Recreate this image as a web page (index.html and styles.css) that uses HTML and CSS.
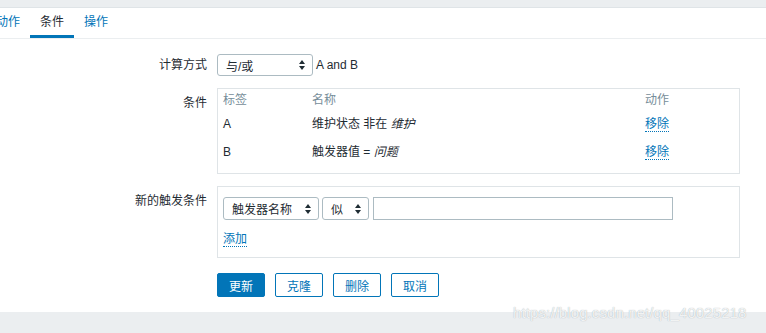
FILE: index.html
```html
<!DOCTYPE html>
<html lang="zh-CN">
<head>
    <meta charset="UTF-8">
    <title>条件</title>
    <link rel="stylesheet" href="styles.css">
</head>
<body>
    <div class="page">
        <div class="panel">
            <ul class="tabs">
                <li class="tab">动作</li>
                <li class="tab active">条件</li>
                <li class="tab">操作</li>
            </ul>

            <div class="form">
                <div class="row">
                    <div class="label">计算方式</div>
                    <div class="field inline">
                        <div class="sel sel-calc">
                            <span>与/或</span>
                            <svg class="arrows" width="6" height="10" viewBox="0 0 6 10"><path d="M3 0 L6 4 L0 4 Z M0 6 L6 6 L3 10 Z" fill="#1f2c33"/></svg>
                        </div>
                        <span class="expr">A and B</span>
                    </div>
                </div>

                <div class="row">
                    <div class="label">条件</div>
                    <div class="field box cond">
                        <div class="trow head">
                            <div class="c1">标签</div>
                            <div class="c2">名称</div>
                            <div class="c3">动作</div>
                        </div>
                        <div class="trow">
                            <div class="c1">A</div>
                            <div class="c2">维护状态 非在 <i>维护</i></div>
                            <div class="c3"><a class="link">移除</a></div>
                        </div>
                        <div class="trow">
                            <div class="c1">B</div>
                            <div class="c2">触发器值 = <i>问题</i></div>
                            <div class="c3"><a class="link">移除</a></div>
                        </div>
                    </div>
                </div>

                <div class="row">
                    <div class="label">新的触发条件</div>
                    <div class="field box newcond">
                        <div class="inline">
                            <div class="sel sel-type">
                                <span>触发器名称</span>
                                <svg class="arrows" width="6" height="10" viewBox="0 0 6 10"><path d="M3 0 L6 4 L0 4 Z M0 6 L6 6 L3 10 Z" fill="#1f2c33"/></svg>
                            </div>
                            <div class="sel sel-op">
                                <span>似</span>
                                <svg class="arrows" width="6" height="10" viewBox="0 0 6 10"><path d="M3 0 L6 4 L0 4 Z M0 6 L6 6 L3 10 Z" fill="#1f2c33"/></svg>
                            </div>
                            <input class="text-input" type="text">
                        </div>
                        <div class="add"><a class="link">添加</a></div>
                    </div>
                </div>

                <div class="row buttons">
                    <div class="label"></div>
                    <div class="field inline btns">
                        <button class="btn primary">更新</button>
                        <button class="btn">克隆</button>
                        <button class="btn">删除</button>
                        <button class="btn">取消</button>
                    </div>
                </div>
            </div>
        </div>
        <div class="watermark">https://blog.csdn.net/qq_40025218</div>
    </div>
</body>
</html>
```

FILE: styles.css
```css
body {
    margin: 0;
    background-color: #ebeef0;
    font-family: "Liberation Sans", Arial, "Noto Sans CJK SC", sans-serif;
    font-size: 12px;
    color: #1f2c33;
    overflow: hidden;
}

.page {
    position: relative;
    width: 766px;
    height: 333px;
    padding-top: 7px;
    box-sizing: border-box;
}

.panel {
    background-color: #fff;
    border-top: 1px solid #dfe4e7;
    height: 305px;
    box-sizing: border-box;
}

/* tabs */
.tabs {
    list-style: none;
    margin: 0 0 0 -14px;
    padding: 0;
    display: flex;
    border-bottom: 1px solid #ebeef0;
    height: 30px;
}

.tab {
    padding: 0 10px;
    line-height: 28px;
    color: #0275b8;
    border-bottom: 3px solid transparent;
    height: 27px;
}

.tab.active {
    color: #1f2c33;
    border-bottom-color: #0275b8;
}

/* form */
.form {
    padding-top: 15px;
    display: flex;
    flex-direction: column;
    gap: 12px;
}

.row {
    display: flex;
    align-items: flex-start;
}

.label {
    width: 207px;
    padding-right: 10px;
    text-align: right;
    flex-shrink: 0;
}

.row:first-child .label {
    line-height: 22px;
}

.inline {
    display: flex;
    align-items: center;
}

.expr {
    margin-left: 3px;
}

.sel {
    display: flex;
    align-items: center;
    justify-content: space-between;
    border: 1px solid #acbbc2;
    border-radius: 3px;
    box-sizing: border-box;
    padding: 0 7px 0 8px;
    background: #fff;
}

.sel-calc {
    width: 96px;
    height: 22px;
}

.sel-type {
    width: 96px;
    height: 23px;
}

.sel-op {
    width: 47px;
    height: 23px;
    margin-left: 3px;
}

.text-input {
    width: 300px;
    height: 23px;
    margin: 0 0 0 4px;
    border: 1px solid #acbbc2;
    box-sizing: border-box;
    padding: 0 5px;
    font: inherit;
}

.box {
    width: 523px;
    border: 1px solid #dfe4e7;
    box-sizing: border-box;
}

/* condition table */
.cond {
    padding: 4px 5px 7px 5px;
}

.label + .cond,
.label + .newcond {
    margin-top: 0;
}

.row:nth-child(2) .label,
.row:nth-child(3) .label {
    padding-top: 5px;
}

.trow {
    display: flex;
    height: 28px;
    line-height: 28px;
}

.trow.head {
    height: 17px;
    line-height: 14px;
    color: #768d99;
}

.c1 {
    width: 89px;
}

.c2 {
    width: 333px;
}

.c3 {
    flex: 1;
}

.link {
    color: #0275b8;
    border-bottom: 1px dotted #0275b8;
    line-height: 14px;
    display: inline-block;
}

.newcond {
    padding: 10px 5px 10px 5px;
}

.add {
    margin-top: 12px;
}

.btns {
    gap: 10px;
    margin-top: 3px;
}

.btn {
    width: 48px;
    height: 24px;
    padding: 0;
    border: 1px solid #0275b8;
    border-radius: 2px;
    background: #fff;
    color: #0275b8;
    font: inherit;
}

.btn.primary {
    background: #0275b8;
    color: #fff;
}

.watermark {
    position: absolute;
    left: 513px;
    top: 304px;
    font-size: 15px;
    color: rgba(255, 255, 255, 0.85);
    text-shadow: 0 0 1px #9aa5ab;
    letter-spacing: 0.1px;
}
```
